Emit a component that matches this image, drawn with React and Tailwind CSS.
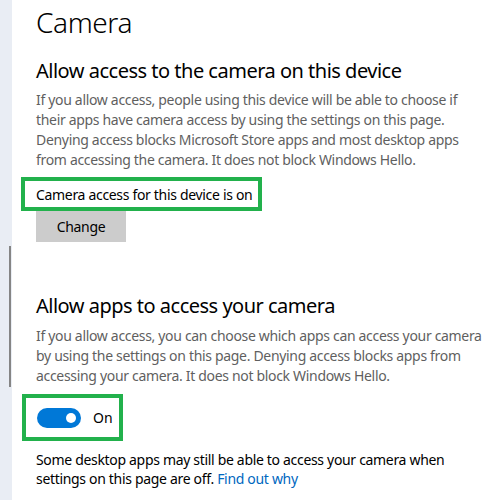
import React, { useState } from 'react';

const font = { fontFamily: '"Segoe UI", "Noto Sans", "Open Sans", sans-serif' };

const Toggle = ({ on, onChange }) => (
  <button
    onClick={() => onChange(!on)}
    className={`relative w-[44px] h-[20px] rounded-full ${on ? 'bg-[#0078d7]' : 'bg-white border-2 border-black'}`}
  >
    <span className={`absolute top-[5px] w-[10px] h-[10px] rounded-full ${on ? 'right-[5px] bg-white' : 'left-[3px] bg-black'}`} />
  </button>
);

export default function App() {
  const [appsOn, setAppsOn] = useState(true);

  return (
    <div className="flex h-[500px] w-[489px] overflow-hidden bg-white text-black" style={font}>
      {/* nav strip + scroll thumb */}
      <div className="w-[12px] shrink-0 bg-[#e9edf4] pt-[246px] pl-[9px]">
        <div className="w-[2px] h-[141px] bg-[#858585]" />
      </div>

      <div className="flex flex-col pl-[24px] pr-2">
        <h1 className="text-[28px] font-light leading-[36px] mt-[4px] tracking-[-0.4px]">Camera</h1>

        <h2 className="text-[20px] leading-[28px] mt-[17px] tracking-[-0.5px]">Allow access to the camera on this device</h2>
        <p className="text-[14px] leading-[20px] text-[#5f5f5f] mt-[5px] w-[442px] tracking-[-0.32px]">
          If you allow access, people using this device will be able to choose if their apps have camera access by using the settings on this page. Denying access blocks Microsoft Store apps and most desktop apps from accessing the camera. It does not block Windows Hello.
        </p>

        <div className="mt-[7px] -ml-[15px] w-[241px] h-[34px] border-4 border-[#22b14c] flex items-center pl-[11px]">
          <span className="text-[14px] whitespace-nowrap tracking-[-0.32px]">Camera access for this device is on</span>
        </div>
        <button className="w-[90px] h-[31px] bg-[#cccccc] text-[14px] tracking-[-0.32px]">Change</button>

        <h2 className="text-[20px] leading-[28px] mt-[50px] tracking-[-0.5px]">Allow apps to access your camera</h2>
        <p className="text-[14px] leading-[20px] text-[#5f5f5f] mt-[6px] w-[446px] tracking-[-0.32px]">
          If you allow access, you can choose which apps can access your camera by using the settings on this page. Denying access blocks apps from accessing your camera. It does not block Windows Hello.
        </p>

        <div className="mt-[8px] -ml-[14px] w-[101px] h-[47px] border-4 border-[#22b14c] flex items-center pl-[11px] gap-[12px]">
          <Toggle on={appsOn} onChange={setAppsOn} />
          <span className="text-[14px]">{appsOn ? 'On' : 'Off'}</span>
        </div>

        <p className="text-[14px] leading-[19px] mt-[9px] w-[446px] tracking-[-0.32px]">
          Some desktop apps may still be able to access your camera when settings on this page are off.{' '}
          <a className="text-[#0067c0]" href="#">Find out why</a>
        </p>
      </div>
    </div>
  );
}
